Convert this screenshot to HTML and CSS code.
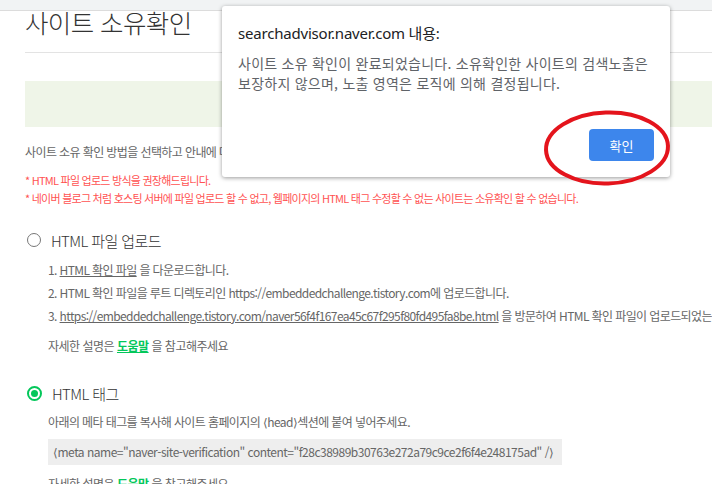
FILE: index.html
```html
<!DOCTYPE html>
<html lang="ko">
<head>
    <meta charset="UTF-8">
    <meta name="viewport" content="width=device-width, initial-scale=1.0">
    <title>사이트 소유확인</title>
    <link rel="stylesheet" href="styles.css">
</head>
<body>
    <div class="topbar"></div>

    <div class="page">
        <h1 class="title">사이트 소유확인</h1>
        <div class="notice"></div>

        <p class="intro">사이트 소유 확인 방법을 선택하고 안내에 따라 진행해주세요.</p>
        <ul class="warn">
            <li>* HTML 파일 업로드 방식을 권장해드립니다.</li>
            <li>* 네이버 블로그 처럼 호스팅 서버에 파일 업로드 할 수 없고, 웹페이지의 HTML 태그 수정할 수 없는 사이트는 소유확인 할 수 없습니다.</li>
        </ul>

        <div class="method">
            <label class="radio-row">
                <span class="radio"></span>
                <span class="radio-label">HTML 파일 업로드</span>
            </label>
            <ol class="steps">
                <li>1. <a href="#" class="link">HTML 확인 파일</a> 을 다운로드합니다.</li>
                <li>2. HTML 확인 파일을 루트 디렉토리인 https://embeddedchallenge.tistory.com에 업로드합니다.</li>
                <li>3. <a href="#" class="link">https://embeddedchallenge.tistory.com/naver56f4f167ea45c67f295f80fd495fa8be.html</a> 을 방문하여 HTML 확인 파일이 업로드되었는지 확인합니다.</li>
            </ol>
            <p class="help">자세한 설명은 <a href="#" class="help-link">도움말</a> 을 참고해주세요</p>
        </div>

        <div class="method">
            <label class="radio-row">
                <span class="radio checked"></span>
                <span class="radio-label">HTML 태그</span>
            </label>
            <p class="desc">아래의 메타 태그를 복사해 사이트 홈페이지의 ⟨head⟩섹션에 붙여 넣어주세요.</p>
            <div class="code">⟨meta name="naver-site-verification" content="f28c38989b30763e272a79c9ce2f6f4e248175ad" /⟩</div>
            <p class="help">자세한 설명은 <a href="#" class="help-link">도움말</a> 을 참고해주세요</p>
        </div>
    </div>

    <div class="dialog">
        <div class="dialog-title">searchadvisor.naver.com 내용:</div>
        <div class="dialog-msg">사이트 소유 확인이 완료되었습니다. 소유확인한 사이트의 검색노출은 보장하지 않으며, 노출 영역은 로직에 의해 결정됩니다.</div>
        <div class="dialog-actions">
            <button class="ok-btn">확인</button>
        </div>
    </div>

    <svg class="circle-mark" width="130" height="80" viewBox="0 0 130 80">
        <ellipse cx="64" cy="39" rx="61" ry="35.5" fill="none" stroke="#e4141c" stroke-width="4" transform="rotate(-2 64 39)"/>
    </svg>
</body>
</html>
```

FILE: styles.css
```css
body {
    margin: 0;
    width: 712px;
    height: 484px;
    overflow: hidden;
    position: relative;
    background-color: #ffffff;
    font-family: 'Noto Sans CJK KR', 'Noto Sans', sans-serif;
    color: #666;
}
.topbar {
    position: relative;
    z-index: 1;
    height: 10px;
    background-color: #f1f3f4;
    border-bottom: 1px solid #dcdcdc;
}
.page {
    width: 1000px;
    padding-left: 25px;
}
.title {
    margin: -4px 0 0;
    height: 45px;
    font-size: 25.5px;
    line-height: 30px;
    font-weight: 300;
    color: #333;
    letter-spacing: -0.6px;
    border-bottom: 1px solid #e3e3e3;
}
.notice {
    margin-top: 28px;
    height: 46px;
    background-color: #eff5e8;
}
.intro {
    margin: 16px 0 0;
    font-size: 12px;
    line-height: 18px;
    letter-spacing: -0.6px;
}
.warn {
    list-style: none;
    margin: 10px 0 0;
    padding: 0;
    font-size: 11px;
    line-height: 18px;
    color: #ff5252;
    letter-spacing: -0.75px;
}
.method {
    margin-top: 23px;
}
.method + .method {
    margin-top: 28px;
}
.radio-row {
    display: flex;
    align-items: center;
    gap: 10px;
    height: 20px;
    padding-left: 2px;
}
.radio {
    width: 12px;
    height: 12px;
    border: 1.5px solid #777;
    border-radius: 50%;
    display: flex;
    align-items: center;
    justify-content: center;
}
.radio.checked {
    border: 2px solid #03c75a;
    width: 11px;
    height: 11px;
}
.radio.checked::after {
    content: '';
    width: 7px;
    height: 7px;
    border-radius: 50%;
    background-color: #03c75a;
}
.radio-label {
    font-size: 15px;
    font-weight: 300;
    color: #333;
    letter-spacing: -0.6px;
}
.steps {
    list-style: none;
    margin: 8px 0 0;
    padding-left: 23px;
    font-size: 12px;
    line-height: 23px;
    letter-spacing: -0.6px;
    white-space: nowrap;
}
.link {
    color: #666;
    text-decoration: underline;
}
.help {
    margin: 10px 0 0 23px;
    font-size: 12px;
    line-height: 18px;
    letter-spacing: -0.5px;
}
.help-link {
    color: #03c75a;
    font-weight: bold;
    text-decoration: underline;
}
.desc {
    margin: 10px 0 0 23px;
    font-size: 12px;
    line-height: 18px;
    letter-spacing: -0.6px;
}
.code {
    margin: 8px 0 0 23px;
    width: 509px;
    height: 26px;
    padding-left: 5px;
    background-color: #eeeeee;
    font-size: 12px;
    line-height: 26px;
    letter-spacing: -0.5px;
    white-space: nowrap;
}

/* 알림 창 */
.dialog {
    position: absolute;
    z-index: 2;
    left: 222px;
    top: 6px;
    width: 448px;
    height: 171px;
    box-sizing: border-box;
    padding: 17px 16px 16px;
    display: flex;
    flex-direction: column;
    background-color: #ffffff;
    border-radius: 3px;
    box-shadow: 0 1px 4px rgba(0, 0, 0, 0.4);
}
.dialog-title {
    font-family: 'Noto Sans', 'Noto Sans CJK KR', sans-serif;
    font-size: 15px;
    line-height: 20px;
    color: #202124;
    letter-spacing: -0.2px;
}
.dialog-msg {
    margin-top: 10px;
    font-size: 14px;
    line-height: 20px;
    color: #5f6368;
    letter-spacing: 0.25px;
}
.dialog-actions {
    margin-top: auto;
    display: flex;
    justify-content: flex-end;
}
.ok-btn {
    width: 65px;
    height: 32px;
    border: none;
    border-radius: 4px;
    background-color: #3d86ec;
    color: #ffffff;
    font-family: 'Noto Sans CJK KR', sans-serif;
    font-size: 13px;
}
.circle-mark {
    position: absolute;
    z-index: 3;
    left: 543px;
    top: 109px;
}
```
